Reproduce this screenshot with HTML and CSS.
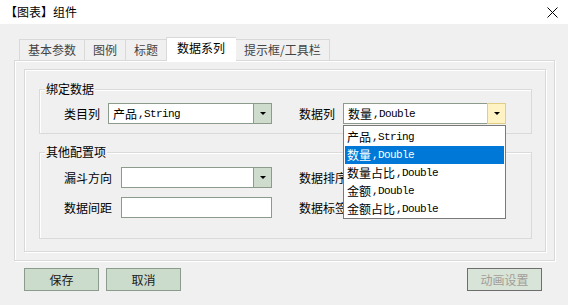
FILE: index.html
```html
<!DOCTYPE html>
<html lang="zh-CN">
<head>
    <meta charset="UTF-8">
    <title>【图表】组件</title>
    <link rel="stylesheet" href="styles.css">
</head>
<body>

<div class="titlebar">
    <span class="title">【图表】组件</span>
    <svg class="close" width="11" height="11" viewBox="0 0 11 11">
        <path d="M0.5 0.5 L10.5 10.5 M10.5 0.5 L0.5 10.5" stroke="#000" stroke-width="1"/>
    </svg>
</div>

<div class="tabs">
    <div class="tab">基本参数</div>
    <div class="tab">图例</div>
    <div class="tab">标题</div>
    <div class="tab active">数据系列</div>
    <div class="tab">提示框/工具栏</div>
</div>

<div class="panel">
    <div class="page">
        <div class="group group-bind">
            <span class="legend">绑定数据</span>
            <div class="row">
                <div class="field">
                    <label>类目列</label>
                    <div class="combo">
                        <span class="value">产品<span class="en">,String</span></span>
                        <span class="drop"><i class="arrow"></i></span>
                    </div>
                </div>
                <div class="field">
                    <label>数据列</label>
                    <div class="combo open">
                        <span class="value">数量<span class="en">,Double</span></span>
                        <span class="drop"><i class="arrow"></i></span>
                        <ul class="dropdown">
                            <li>产品<span class="en">,String</span></li>
                            <li class="selected">数量<span class="en">,Double</span></li>
                            <li>数量占比<span class="en">,Double</span></li>
                            <li>金额<span class="en">,Double</span></li>
                            <li>金额占比<span class="en">,Double</span></li>
                        </ul>
                    </div>
                </div>
            </div>
        </div>

        <div class="group group-other">
            <span class="legend">其他配置项</span>
            <div class="row">
                <div class="field">
                    <label>漏斗方向</label>
                    <div class="combo">
                        <span class="value"></span>
                        <span class="drop"><i class="arrow"></i></span>
                    </div>
                </div>
                <div class="field">
                    <label>数据排序</label>
                    <div class="combo">
                        <span class="value"></span>
                        <span class="drop"><i class="arrow"></i></span>
                    </div>
                </div>
            </div>
            <div class="row">
                <div class="field">
                    <label>数据间距</label>
                    <input class="text" type="text">
                </div>
                <div class="field">
                    <label>数据标签</label>
                    <input class="text" type="text">
                </div>
            </div>
        </div>
    </div>
</div>

<div class="actions">
    <button class="btn">保存</button>
    <button class="btn">取消</button>
    <button class="btn disabled">动画设置</button>
</div>

</body>
</html>
```

FILE: styles.css
```css
body {
    margin: 0;
    width: 568px;
    height: 305px;
    overflow: hidden;
    background-color: #f0f0f0;
    font-family: "Noto Sans CJK SC", sans-serif;
    font-size: 12px;
    line-height: 14px;
    color: #000;
}
.en {
    font-family: "Liberation Mono", monospace;
    font-size: 11px;
    letter-spacing: -0.6px;
    margin-left: 1px;
}

.titlebar {
    height: 24px;
    background-color: #fff;
    display: flex;
    align-items: center;
    justify-content: space-between;
    padding: 0 10px 0 5px;
}
.title {
    font-size: 12px;
}
.close {
    margin-top: 1px;
}

.tabs {
    display: flex;
    align-items: flex-end;
    height: 24px;
    margin-top: 13px;
    padding-left: 19px;
}
.tab {
    height: 21px;
    margin-bottom: 1px;
    box-sizing: border-box;
    padding: 3px 8px 0 8px;
    border: 1px solid #d9d9d9;
    border-bottom: none;
    border-right: none;
    color: #444;
}
.tab:last-child {
    border-right: 1px solid #d9d9d9;
}
.tab.active {
    height: 24px;
    margin-bottom: 0;
    padding: 3px 11px 0 10px;
    background-color: #fff;
    color: #000;
    position: relative;
    z-index: 1;
}
.tab.active + .tab {
    border-left: none;
}

.panel {
    margin: -1px 13px 0 14px;
    height: 201px;
    box-sizing: border-box;
    padding: 8px 8px 8px 9px;
    border: 1px solid #d9d9d9;
    box-shadow: inset 1px 1px 0 #fff, 1px 1px 0 #fff;
}
.page {
    height: 183px;
    box-sizing: border-box;
    padding: 19px 13px 0 14px;
    border: 1px solid #d9d9d9;
    box-shadow: inset 1px 1px 0 #fff, 1px 1px 0 #fff;
}

.group {
    position: relative;
    border: 1px solid #dadada;
    box-shadow: inset 1px 1px 0 #fff;
    padding-left: 24px;
}
.group-bind {
    height: 45px;
    box-sizing: border-box;
    padding-top: 13px;
}
.group-other {
    margin-top: 18px;
    height: 87px;
    box-sizing: border-box;
    padding-top: 14px;
    display: flex;
    flex-direction: column;
    gap: 9px;
}
.legend {
    position: absolute;
    left: 5px;
    top: -8px;
    padding: 0 1px;
    background-color: #f0f0f0;
}

.row {
    display: grid;
    grid-template-columns: 208px 207px;
    column-gap: 27px;
}
.field {
    display: flex;
    align-items: center;
    gap: 9px;
    height: 21px;
}
.group-bind .field {
    gap: 8px;
}
.field label {
    white-space: nowrap;
}

.combo {
    position: relative;
    flex: 1;
    height: 21px;
    box-sizing: border-box;
    display: flex;
    border: 1px solid #8c9c8c;
    background-color: #fff;
}
.combo .value {
    flex: 1;
    display: flex;
    align-items: center;
    padding-left: 4px;
    white-space: nowrap;
}
.combo .drop {
    width: 17px;
    display: flex;
    align-items: center;
    justify-content: center;
    border-left: 1px solid #8c9c8c;
    background-color: #cddccd;
}
.arrow {
    width: 0;
    height: 0;
    border-left: 3px solid transparent;
    border-right: 3px solid transparent;
    border-top: 3px solid #000;
}
.combo.open {
    z-index: 2;
}
.combo.open .drop {
    margin: -1px -1px -1px 0;
    border: 1px solid #e2cd85;
    background-color: #fff3c4;
}

.dropdown {
    position: absolute;
    top: 21px;
    left: -1px;
    right: -1px;
    margin: 0;
    padding: 2px 1px 0 1px;
    list-style: none;
    height: 94px;
    box-sizing: border-box;
    border: 1px solid #7a7a7a;
    background-color: #fff;
}
.dropdown li {
    height: 18px;
    display: flex;
    align-items: center;
    padding-left: 2px;
    white-space: nowrap;
}
.dropdown li.selected {
    background-color: #0078d7;
    color: #fff;
}

.text {
    flex: 1;
    min-width: 0;
    height: 21px;
    box-sizing: border-box;
    margin: 0;
    border: 1px solid #8c9c8c;
    background-color: #fff;
}

.actions {
    display: flex;
    gap: 7px;
    margin-top: 7px;
    padding: 0 26px 0 24px;
}
.btn {
    width: 75px;
    height: 23px;
    box-sizing: border-box;
    border: 1px solid #8c9c8c;
    background-color: #ccdccc;
    font-family: "Noto Sans CJK SC", sans-serif;
    font-size: 12px;
    color: #1a1a1a;
    padding: 0;
}
.btn.disabled {
    margin-left: auto;
    border-color: #6e6e6e;
    background-color: #d8e4d8;
    color: #a39d97;
}
```
